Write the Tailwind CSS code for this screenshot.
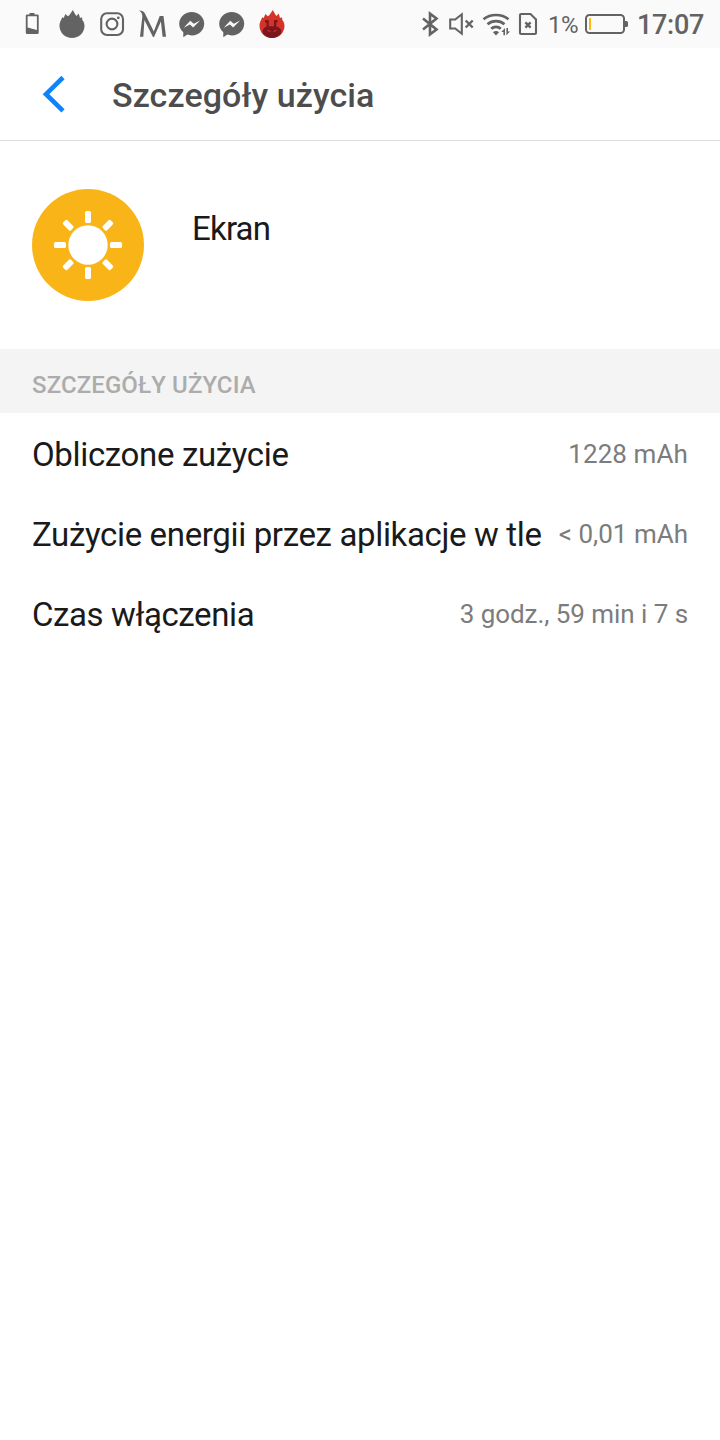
<!DOCTYPE html>
<html lang="pl">
<head>
    <meta charset="UTF-8">
    <meta name="viewport" content="width=device-width, initial-scale=1.0">
    <title>Szczegóły użycia</title>
    <script src="https://cdn.jsdelivr.net/npm/@tailwindcss/browser@4"></script>
</head>
<body class="bg-white min-h-screen font-[Roboto,sans-serif] text-[#1a1a1a]">

    <!-- Status bar -->
    <div class="h-12 bg-[#fafafa] flex items-center justify-between pl-3 pr-4 text-[#636363]">
        <!-- Notifications -->
        <div class="flex">
            <!-- Low battery -->
            <svg class="w-10 h-12" viewBox="12 0 40 48" fill="currentColor">
                <path d="M29.500 13h5v2h-5z"/>
                <path fill-rule="evenodd" d="M27 14.500h10.500a1.200 1.200 0 0 1 1.200 1.200v17a1.200 1.200 0 0 1-1.200 1.200H27a1.200 1.200 0 0 1-1.200-1.200v-17a1.200 1.200 0 0 1 1.200-1.200zM27.600 16.300v11.200l9.300 2.400V16.300z"/>
            </svg>
            <!-- Flame -->
            <svg class="w-10 h-12" viewBox="52 0 40 48" fill="currentColor">
                <path d="M60.800 20.500L62.300 17.300 63.700 17.900 65.400 14 67.800 16.300 69.500 15 72.800 10 75.300 14.500 76.500 16 78.700 13.500 80 18 82 17.300 82.300 20C83.800 21.800 84.500 23.500 84.500 25.800C84.500 32.700 79 38 72 38S59.500 32.700 59.500 25.800C59.500 23.800 60 22 60.800 20.500z"/>
            </svg>
            <!-- Instagram -->
            <svg class="w-10 h-12" viewBox="92 0 40 48" fill="none" stroke="currentColor" stroke-width="2.100">
                <rect x="101.200" y="13.200" width="21.800" height="21.800" rx="5.800"/>
                <circle cx="112" cy="24" r="5.400"/>
                <circle cx="118.300" cy="17.800" r="1.400" fill="currentColor" stroke="none"/>
            </svg>
            <!-- M -->
            <svg class="w-10 h-12" viewBox="132 0 40 48" fill="currentColor">
                <path d="M139 10.500C142.500 10.600 144.600 12 145.400 14.500L153.800 31.500 159.700 16H163.500L166 36.800H162.600L160.900 21.500 154 37H153L144.400 20 143.300 36.800H140L142.300 17C142.500 14.200 141.500 12.200 139 10.500z"/>
            </svg>
            <!-- Messenger -->
            <svg class="w-10 h-12" viewBox="172 0 40 48" fill="currentColor">
                <path fill-rule="evenodd" d="M191.700 12c7 0 12.500 5.200 12.500 11.700s-5.500 11.700-12.500 11.700c-1.600 0-3-.3-4.400-.8l-4 2.600v-4.900c-2.500-2.200-4.100-5.100-4.100-8.600 0-6.500 5.500-11.700 12.500-11.700zM190.300 20.800l-6.600 7 6.200-3.200 3.300 3 6.900-7-6.300 3.200z"/>
            </svg>
            <svg class="w-10 h-12" viewBox="172 0 40 48" fill="currentColor">
                <path fill-rule="evenodd" d="M191.700 12c7 0 12.500 5.200 12.500 11.700s-5.500 11.700-12.500 11.700c-1.600 0-3-.3-4.400-.8l-4 2.600v-4.900c-2.500-2.200-4.100-5.100-4.100-8.600 0-6.500 5.500-11.700 12.500-11.700zM190.300 20.800l-6.600 7 6.200-3.200 3.300 3 6.900-7-6.300 3.200z"/>
            </svg>
            <!-- AnTuTu -->
            <svg class="w-10 h-12" viewBox="52 0 40 48">
                <path fill="#d33429" d="M60.800 20.500L62.300 17.300 63.700 17.900 65.400 14 67.800 16.300 69.500 15 72.800 10 75.300 14.500 76.500 16 78.700 13.500 80 18 82 17.300 82.300 20C83.800 21.800 84.500 23.500 84.500 25.800C84.500 32.700 79 38 72 38S59.500 32.700 59.500 25.800C59.500 23.800 60 22 60.800 20.500z"/>
                <path fill="#7d151c" d="M65 20H68.700V26.300H74V20H77.500V22.500H76.300V26.600C78.800 27.200 80.500 28.500 81.300 30.300C81.500 31.500 81.300 32.700 80.700 34C78.500 36.500 75.500 38 72 38S65.500 36.500 63.300 34C62.600 32.700 62.400 31.500 62.700 30.300C63.500 28.500 64.800 27.200 66.600 26.600V22.500H65z"/>
                <path stroke="#d33429" stroke-width="1.100" fill="none" d="M67.500 30.300l3 1.200M76.500 30.300l-3 1.200"/>
            </svg>
        </div>

        <!-- System icons -->
        <div class="flex items-center">
            <!-- Bluetooth -->
            <svg class="w-7 h-12" viewBox="417 0 28 48" fill="none" stroke="currentColor" stroke-width="2.600">
                <path d="M423 18.500l13.500 11-6.500 4.800V13.700l6.500 4.800L423 29.500"/>
            </svg>
            <!-- Muted speaker -->
            <svg class="w-8 h-12" viewBox="445 0 32 48" fill="none" stroke="currentColor" stroke-width="2.100">
                <path d="M450.200 19.500h5l6.600-5.200v19.400l-6.600-5.200h-5z"/>
                <path d="M465.700 20.500l7 7M472.700 20.500l-7 7" stroke-width="2.400"/>
            </svg>
            <!-- Wi-Fi -->
            <svg class="w-9 h-12" viewBox="477 0 36 48" fill="none" stroke="currentColor" stroke-width="2.700">
                <path d="M483.500 19.200c7-5.600 18-5.600 25 0M487.500 24.200c4.800-4.200 12.200-4.200 17 0M491.200 28.800c2.700-2.500 6.900-2.500 9.600 0"/>
                <path d="M493 32.200c1.600-1.600 4.400-1.600 6 0l-3 3.200z" fill="currentColor" stroke="none"/>
                <path d="M501.300 32l3.700-4v7.200h-1.600V32zM510 31.400l-3.600 3.800V28h1.600v3.400z" fill="currentColor" stroke="none"/>
            </svg>
            <!-- No SIM -->
            <svg class="w-[30px] h-12" viewBox="513 0 30 48" fill="none" stroke="currentColor" stroke-width="2.100">
                <path d="M521 14h9.500l5.500 5.500V33a1 1 0 0 1-1 1h-14a1 1 0 0 1-1-1V15a1 1 0 0 1 1-1z"/>
                <path d="M525.400 22.400l5.200 5.200M530.600 22.400l-5.200 5.200" stroke-width="2.400"/>
            </svg>
            <span class="w-[42px] pl-[5px] pt-0.5 text-2xl leading-none tracking-[-0.6px] whitespace-nowrap">1%</span>
            <!-- Battery level -->
            <svg class="w-[52px] h-12" viewBox="585 0 52 48" fill="none">
                <rect x="586" y="15" width="38" height="18" rx="3.500" stroke="currentColor" stroke-width="2"/>
                <path d="M625 21h1.500a1.500 1.500 0 0 1 1.500 1.500v3a1.500 1.500 0 0 1-1.500 1.500H625z" fill="currentColor"/>
                <path d="M589 18h2v12h-2z" fill="#fdb913"/>
            </svg>
            <span class="w-[67px] pt-[3px] text-[27px] font-medium leading-none tracking-[-0.3px]">17:07</span>
        </div>
    </div>

    <!-- Header -->
    <div class="h-[93px] flex items-center border-b border-[#dfdfdf] pl-10">
        <svg class="w-7 h-10" viewBox="40 74 28 40" fill="none" stroke="#0d84ff" stroke-width="4.600">
            <path d="M63 77.500L46 94.200 63 110.800"/>
        </svg>
        <h1 class="ml-11 pt-0.5 text-[34px] font-medium leading-10 tracking-[0.1px] text-[#4d4d4d]">Szczegóły użycia</h1>
    </div>

    <!-- Battery consumer -->
    <div class="h-52 flex px-8 pt-12">
        <svg class="w-28 h-28" viewBox="0 0 112 112" fill="#fff">
            <circle cx="56" cy="56" r="56" fill="#f9b418"/>
            <circle cx="56" cy="56" r="19.700"/>
            <rect x="53" y="22" width="6" height="12" rx="1.500"/>
            <rect x="53" y="78" width="6" height="12" rx="1.500"/>
            <rect x="22" y="53" width="12" height="6" rx="1.500"/>
            <rect x="78" y="53" width="12" height="6" rx="1.500"/>
            <g transform="rotate(45 56 56)">
                <rect x="53" y="22.500" width="6" height="11" rx="1.500"/>
                <rect x="53" y="78.500" width="6" height="11" rx="1.500"/>
                <rect x="22.500" y="53" width="11" height="6" rx="1.500"/>
                <rect x="78.500" y="53" width="11" height="6" rx="1.500"/>
            </g>
        </svg>
        <h2 class="ml-12 mt-5 text-[33px] leading-10 tracking-[-0.8px]">Ekran</h2>
    </div>

    <!-- Section title -->
    <div class="h-16 bg-[#f4f4f4] flex items-center px-8 pt-2">
        <h3 class="text-2xl font-medium tracking-[0.1px] text-[#acacac] uppercase">Szczegóły użycia</h3>
    </div>

    <!-- Details -->
    <div class="px-8">
        <div class="h-20 flex items-center justify-between pt-0.5 whitespace-nowrap">
            <span class="pt-px text-[33px] tracking-[-0.35px]">Obliczone zużycie</span>
            <span class="text-[26px] tracking-[0.1px] text-[#7c7c7c]">1228 mAh</span>
        </div>
        <div class="h-20 flex items-center justify-between pt-0.5 whitespace-nowrap">
            <span class="pt-px text-[33px] tracking-[-0.35px]">Zużycie energii przez aplikacje w tle</span>
            <span class="text-[26px] text-[#7c7c7c]">&lt; 0,01 mAh</span>
        </div>
        <div class="h-20 flex items-center justify-between pt-0.5 whitespace-nowrap">
            <span class="pt-px text-[33px] tracking-[-0.4px]">Czas włączenia</span>
            <span class="text-[26px] tracking-[-0.05px] text-[#7c7c7c]">3 godz., 59 min i 7 s</span>
        </div>
    </div>

</body>
</html>
